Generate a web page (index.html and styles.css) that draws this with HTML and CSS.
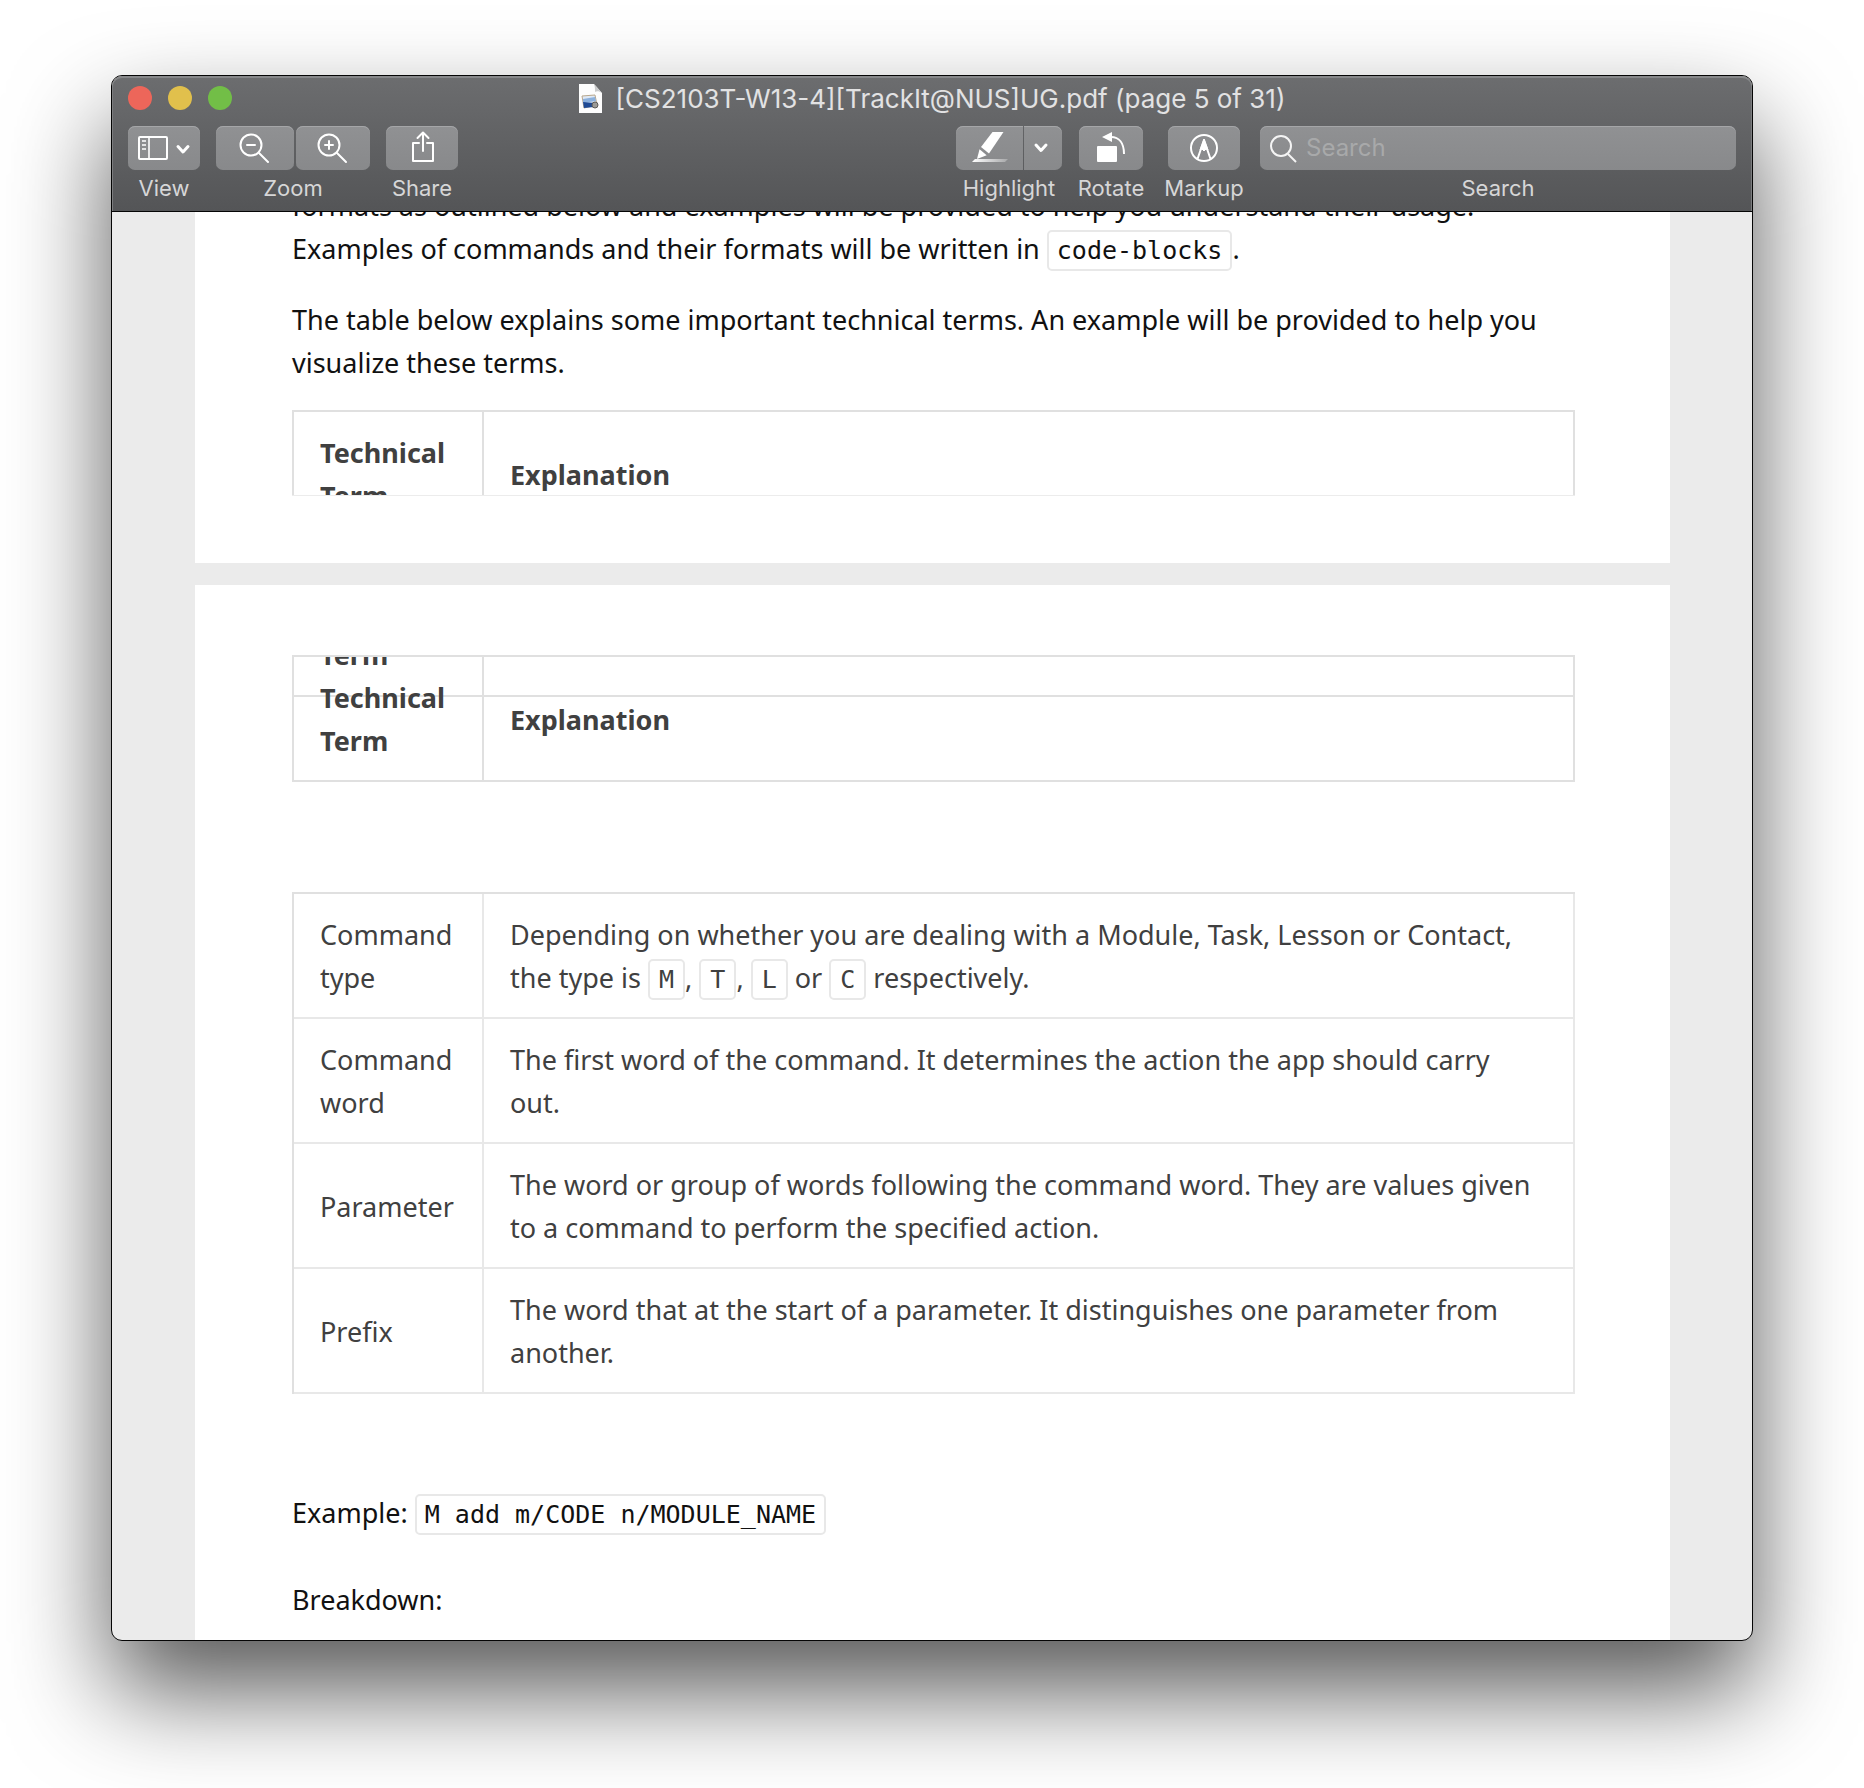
FILE: index.html
```html
<!DOCTYPE html>
<html lang="en">
<head>
<meta charset="utf-8">
<title>[CS2103T-W13-4][TrackIt@NUS]UG.pdf</title>
<link rel="stylesheet" href="styles.css">
</head>
<body>
<main class="window">
  <header class="chrome">
    <div class="titlebar">
      <div class="lights">
        <button class="light close" type="button" aria-label="Close"></button>
        <button class="light minimise" type="button" aria-label="Minimise"></button>
        <button class="light expand" type="button" aria-label="Full screen"></button>
      </div>
      <h1 class="title">
        <svg class="file-icon" width="24" height="30" viewBox="0 0 24 30" aria-hidden="true">
          <path d="M0 0h15l8 9v20H0z" fill="#fdfdfd"/>
          <path d="M15 0l8 9c-3-2-5-2-7-1 0-3 0-5-1-8z" fill="#c9cacb"/>
          <path d="M3 12l13-1 2 10-13 3z" fill="#dfe9f5" stroke="#b9a78c"/>
          <path d="M4 15l12-2 1 4L4 19z" fill="#8cb1dd"/>
          <path d="M4 18l12 1-1 4-10 1z" fill="#1f4a94"/>
          <circle cx="16" cy="21" r="3" fill="#9b9a96" stroke="#5c5a57"/>
        </svg>
        <span>[CS2103T-W13-4][TrackIt@NUS]UG.pdf (page 5 of 31)</span>
      </h1>
    </div>
    <div class="toolbar">
      <div class="tool tool-view">
        <div class="buttons">
          <button class="btn" type="button" aria-labelledby="l-view">
            <svg width="72" height="44" viewBox="0 0 72 44" fill="none" stroke="#fff" stroke-width="2">
              <rect x="11" y="11" width="28" height="22" rx="1"/>
              <path d="M21 11v22M14 15h4M14 19h4M14 23h4" stroke-width="1.6"/>
              <path d="M50 20.500l5 5.500 5-5.500" stroke-width="3" stroke-linecap="round" stroke-linejoin="round"/>
            </svg>
          </button>
        </div>
        <span class="label" id="l-view">View</span>
      </div>
      <div class="tool tool-zoom">
        <div class="buttons">
          <button class="btn" type="button" aria-label="Zoom out">
            <svg width="78" height="44" viewBox="0 0 78 44" fill="none" stroke="#fff" stroke-width="2" stroke-linecap="round">
              <circle cx="35" cy="19" r="10.500"/><path d="M31 19h8M43 27l9 9"/>
            </svg>
          </button>
          <button class="btn" type="button" aria-label="Zoom in">
            <svg width="74" height="44" viewBox="0 0 74 44" fill="none" stroke="#fff" stroke-width="2" stroke-linecap="round">
              <circle cx="33" cy="19" r="10.500"/><path d="M29 19h8M33 15v8M41 27l9 9"/>
            </svg>
          </button>
        </div>
        <span class="label">Zoom</span>
      </div>
      <div class="tool tool-share">
        <div class="buttons">
          <button class="btn" type="button" aria-labelledby="l-share">
            <svg width="72" height="44" viewBox="0 0 72 44" fill="none" stroke="#fff" stroke-width="2" stroke-linecap="round" stroke-linejoin="round">
              <path d="M33 17h-6v18h20V17h-6M37 25V7M31.500 12L37 6.500l5.500 5.500"/>
            </svg>
          </button>
        </div>
        <span class="label" id="l-share">Share</span>
      </div>
      <div class="spacer"></div>
      <div class="tool tool-highlight">
        <div class="buttons joined">
          <button class="btn" type="button" aria-labelledby="l-highlight">
            <svg width="67" height="44" viewBox="0 0 67 44" fill="#fff">
              <defs><linearGradient id="stroke-fade"><stop offset="0" stop-color="#fff"/><stop offset="1" stop-color="#fff" stop-opacity=".25"/></linearGradient></defs>
              <path d="M36.500 6H47.500L33 27.500 25 21z"/>
              <path d="M23.500 23.300L30.700 29.300 21 33z"/>
              <path d="M19 33H52L49 36H16z" fill="url(#stroke-fade)"/>
            </svg>
          </button>
          <button class="btn" type="button" aria-label="Highlight colours">
            <svg width="38" height="44" viewBox="0 0 38 44" fill="none" stroke="#fff" stroke-width="3" stroke-linecap="round" stroke-linejoin="round">
              <path d="M12 19l5 5.500 5-5.500"/>
            </svg>
          </button>
        </div>
        <span class="label" id="l-highlight">Highlight</span>
      </div>
      <div class="tool tool-rotate">
        <div class="buttons">
          <button class="btn" type="button" aria-labelledby="l-rotate">
            <svg width="64" height="44" viewBox="0 0 64 44" fill="#fff">
              <rect x="18" y="20" width="20" height="16" rx="1"/>
              <path d="M23 11L33 6v10z"/>
              <path d="M32 11C40 11 45 17 45 28" fill="none" stroke="#fff" stroke-width="2"/>
            </svg>
          </button>
        </div>
        <span class="label" id="l-rotate">Rotate</span>
      </div>
      <div class="tool tool-markup">
        <div class="buttons">
          <button class="btn" type="button" aria-labelledby="l-markup">
            <svg width="72" height="44" viewBox="0 0 72 44" fill="none" stroke="#fff" stroke-width="2" stroke-linejoin="round">
              <circle cx="36" cy="22" r="13"/>
              <path d="M29.500 33L36 14l6.500 19"/>
              <path d="M36 13l4 11-2-1-2 2-2-2-2 1z" fill="#fff" stroke-width="1"/>
            </svg>
          </button>
        </div>
        <span class="label" id="l-markup">Markup</span>
      </div>
      <div class="tool tool-search">
        <div class="search">
          <svg width="44" height="44" viewBox="0 0 44 44" fill="none" stroke="#f4f4f4" stroke-width="2" aria-hidden="true">
            <circle cx="21" cy="20" r="10"/><path d="M28 28l8 8"/>
          </svg>
          <input class="search-input" id="search" type="text" placeholder="Search">
        </div>
        <label class="label" for="search">Search</label>
      </div>
    </div>
  </header>

  <section class="pane">
    <article class="page page-first">
      <p class="text">formats as outlined below and examples will be provided to help you understand their usage. Examples of commands and their formats will be written in <code>code-blocks</code>.</p>
      <p class="text">The table below explains some important technical terms. An example will be provided to help you visualize these terms.</p>
      <div class="slice">
        <table class="terms">
          <thead><tr><th class="term">Technical Term</th><th>Explanation</th></tr></thead>
        </table>
      </div>
    </article>

    <article class="page page-second">
      <div class="carried">
        <table class="terms">
          <thead><tr><th class="term">Technical Term</th><th>Explanation</th></tr></thead>
        </table>
        <div class="remnant"><span>Term</span></div>
      </div>
      <table class="terms body-rows">
        <tbody>
          <tr><td class="term">Command type</td><td>Depending on whether you are dealing with a Module, Task, Lesson or Contact, the type is <code>M</code>, <code>T</code>, <code>L</code> or <code>C</code> respectively.</td></tr>
          <tr><td class="term">Command word</td><td>The first word of the command. It determines the action the app should carry out.</td></tr>
          <tr><td class="term">Parameter</td><td>The word or group of words following the command word. They are values given to a command to perform the specified action.</td></tr>
          <tr><td class="term">Prefix</td><td>The word that at the start of a parameter. It distinguishes one parameter from another.</td></tr>
        </tbody>
      </table>
      <p class="text example">Example: <code>M add m/CODE n/MODULE_NAME</code></p>
      <p class="text">Breakdown:</p>
    </article>
  </section>
</main>
</body>
</html>
```
FILE: styles.css
```css
* { box-sizing: border-box; }

body {
  margin: 0;
  height: 100vh;
  padding: 75px 111px 147px;
  display: flex;
  background: #fff;
  font-family: Inter, "Liberation Sans", sans-serif;
}

.window {
  flex: 1;
  min-width: 0;
  display: flex;
  flex-direction: column;
  overflow: hidden;
  border: 1px solid #050505;
  border-radius: 11px;
  background: #ebebeb;
  box-shadow: 0 50px 100px rgba(0, 0, 0, .66);
}

/* Title bar and toolbar */
.chrome {
  flex: none;
  height: 136px;
  border-bottom: 1px solid #050505;
  background: linear-gradient(#6c6d6f, #545557);
  box-shadow: inset 0 2px 0 #87888a, inset 1px 0 0 #7c7d7f, inset -1px 0 0 #7c7d7f;
  border-radius: 10px 10px 0 0;
}

.titlebar {
  display: grid;
  grid-template-columns: 1fr auto 1fr;
  align-items: center;
  height: 50px;
  padding: 0 16px;
}

.lights { display: flex; gap: 16px; padding-bottom: 6px; }

.light {
  width: 24px;
  height: 24px;
  padding: 0;
  border: 0;
  border-radius: 50%;
}
.close { background: #ed665a; }
.minimise { background: #e1c04c; }
.expand { background: #72be47; }

.title {
  display: flex;
  align-items: center;
  gap: 13px;
  margin: 0;
  padding-bottom: 4px;
  color: #e2e2e3;
  font-size: 26px;
  font-weight: 400;
  line-height: 30px;
  white-space: nowrap;
}

.toolbar {
  display: flex;
  padding: 0 16px;
}

.tool {
  flex: none;
  display: flex;
  flex-direction: column;
  align-items: center;
  gap: 4px;
}
.tool-view { width: 72px; margin-right: 16px; }
.tool-zoom { width: 154px; margin-right: 16px; }
.tool-share { width: 72px; }
.spacer { flex: 1; }
.tool-highlight { width: 106px; margin-right: 17px; }
.tool-rotate { width: 64px; margin-right: 25px; }
.tool-markup { width: 72px; margin-right: 20px; }
.tool-search { width: 476px; align-items: stretch; }

.buttons { display: flex; gap: 2px; }
.joined { gap: 1px; }

.btn, .search {
  display: flex;
  padding: 0;
  border: 0;
  border-radius: 7px;
  background: linear-gradient(#909193, #88898b);
  box-shadow: inset 0 1px 0 #a5a6a8;
}
.joined .btn:first-child { border-radius: 7px 0 0 7px; }
.joined .btn:last-child { border-radius: 0 7px 7px 0; }

.label {
  color: #d6d6d7;
  font-size: 22px;
  line-height: 28px;
  text-align: center;
  white-space: nowrap;
}

.search-input {
  flex: 1;
  min-width: 0;
  height: 44px;
  padding: 0 8px 1px 2px;
  border: 0;
  outline: 0;
  background: transparent;
  color: #fff;
  font: 24px Inter, "Liberation Sans", sans-serif;
}
.search-input::placeholder { color: #a8a9aa; opacity: 1; }

/* Document */
.pane {
  flex: 1;
  min-height: 0;
  overflow: hidden;
  padding: 0 82px 0 83px;
}

.page {
  padding: 0 95px 0 97px;
  background: #fff;
  color: #111;
  font: 27px/43px "Noto Sans", "Open Sans", sans-serif;
}
.page-first { margin-top: -28px; padding-bottom: 67px; }
.page-second { margin-top: 22px; padding-top: 70px; padding-bottom: 60px; }

.text { margin: 0 0 28px; }
.example { margin: 97px 0 44px; }

code {
  padding: 4px 8px;
  border: 2px solid #e8e8e8;
  border-radius: 5px;
  font: 25px/29px "DejaVu Sans Mono", monospace;
}

.terms {
  width: 100%;
  table-layout: fixed;
  border-collapse: separate;
  border-spacing: 0;
  border: solid #e0e0e0;
  border-width: 2px 0 0 2px;
  color: #404040;
}
.terms th, .terms td {
  padding: 19px 32px 18px 26px;
  border: solid #e0e0e0;
  border-width: 0 2px 2px 0;
  text-align: left;
  vertical-align: middle;
}
.terms td { border-color: #e8e8e8; }
.terms .term { width: 190px; padding-right: 26px; }
.terms th { font-weight: 700; }
.terms code { padding: 4px 9px; }

.slice {
  height: 86px;
  margin-top: -2px;
  overflow: hidden;
  border-bottom: 1px solid #ececec;
}

/* The split header row's lower half lies behind the repeated header */
.carried { position: relative; isolation: isolate; }
.remnant {
  position: absolute;
  inset: 0 0 auto;
  height: 42px;
  display: flex;
  align-items: flex-end;
  overflow: hidden;
  padding: 0 28px 19px;
  border-bottom: 2px solid #e0e0e0;
  color: #404040;
  font-weight: 700;
  z-index: -1;
}
.body-rows { margin-top: 110px; }
```
